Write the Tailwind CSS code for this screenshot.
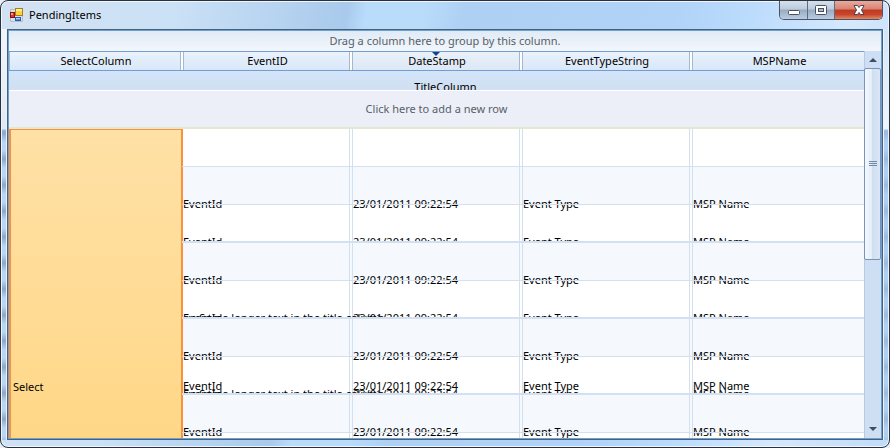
<!DOCTYPE html>
<html lang="en">
  <head>
    <meta charset="utf-8" />
    <meta content="width=device-width, initial-scale=1" name="viewport" />
    <title>PendingItems</title>
    <script src="https://cdn.jsdelivr.net/npm/@tailwindcss/browser@4"></script>
  </head>

  <body
    class="h-screen overflow-hidden bg-[#e6eef6] font-['Noto_Sans','Open_Sans',sans-serif] text-[11px] leading-4 text-black"
  >
    <main
      class="flex h-full flex-col rounded-lg border border-[#2b303c] bg-[linear-gradient(100deg,#d3e2f2_0%,#cbe1f6_18%,#a9caec_36%,#badcfb_38%,#badcfb_44%,#aed0f3_48%,#b0d3f7_70%,#bcdcfc_78%,#d5e8fd_88%,#c0dbf8_100%)] shadow-[inset_0_0_0_1px_#eef6ff]"
    >
      <header class="flex h-7 shrink-0 items-start justify-between pr-1.5 pl-2">
        <div class="flex items-center gap-1 pt-1.5">
          <svg class="size-4" viewBox="0 0 16 16" aria-hidden="true">
            <path d="M1.500 2.500h5v4M1.500 10v4.500h4M6 14.500h7.500V9M1.500 2.500v3" fill="none" stroke="#bdbab8" />
            <rect x="6.500" y="1.500" width="7" height="7" fill="#fcd23c" stroke="#b07c10" />
            <path d="M7 2h6v2H7z" fill="#fff0a0" />
            <rect x="1.500" y="5.500" width="4" height="5" fill="#d03a2a" stroke="#8b1410" />
            <path d="M2 6h2v2H2z" fill="#f59a80" />
            <rect x="6.500" y="10.500" width="5" height="3" fill="#5a94ea" stroke="#2e5cb4" />
            <path d="M7 11h4v1H7z" fill="#b4d2ff" />
          </svg>
          <h1 class="text-[11px] leading-4">PendingItems</h1>
        </div>
        <div
          class="flex h-[19px] overflow-hidden rounded-b-[5px] border border-t-0 border-[#4c5566]"
        >
          <button
            type="button"
            aria-label="Minimize"
            class="grid w-7 place-items-center border-r border-[#5e6b80] bg-[linear-gradient(#d5e0ec_0%,#bccbdc_45%,#98abc1_50%,#b9cde2_100%)]"
          >
            <svg class="h-3.5 w-4" viewBox="0 0 16 14">
              <rect x="2.500" y="7.500" width="11" height="4" rx="1" fill="#fff" stroke="#4b5160" />
            </svg>
          </button>
          <button
            type="button"
            aria-label="Maximize"
            class="grid w-[27px] place-items-center border-r border-[#5e6b80] bg-[linear-gradient(#d5e0ec_0%,#bccbdc_45%,#98abc1_50%,#b9cde2_100%)]"
          >
            <svg class="h-3.5 w-4" viewBox="0 0 16 14">
              <rect x="2.500" y="2.500" width="11" height="9" rx="1" fill="#fff" stroke="#4b5160" />
              <rect x="5.500" y="5.500" width="5" height="3" fill="#a9bdd2" stroke="#4b5160" />
            </svg>
          </button>
          <button
            type="button"
            aria-label="Close"
            class="grid w-[47px] place-items-center bg-[linear-gradient(#e9aa9c_0%,#d98270_45%,#bd3a22_50%,#c9452c_75%,#e08a66_100%)]"
          >
            <svg class="h-3.5 w-4" viewBox="0 0 16 14">
              <path d="M3 2.500h3.500L8 4.500l1.500-2H13L10.500 7l2.500 4.500H9.500L8 9.500l-1.500 2H3L5.500 7z" fill="#fff" stroke="#4b4453" />
            </svg>
          </button>
        </div>
      </header>

      <div class="mb-[7px] flex min-h-0 flex-1">
        <div
          class="w-1.5 shrink-0 border-x border-[#eaf4ff] bg-[linear-gradient(#eff6fe_0px,#dfe9f5_100px,transparent_101px),repeating-linear-gradient(#8fa6c8_0px,#b9d7f5_9px,#b9d7f5_17px,#8fa6c8_26px)]"
        ></div>
        <section
          class="flex min-h-0 min-w-0 flex-1 flex-col border border-[#4a6078] bg-white"
        >
          <div class="flex min-h-0 flex-1 flex-col border border-[#6aa0d2]">
            <p
              class="h-5 shrink-0 bg-linear-to-b from-[#e0ebf6] to-[#f3f6fc] text-center leading-5 text-[#585f69]"
            >
              Drag a column here to group by this column.
            </p>
            <div class="flex min-h-0 flex-1">
              <div class="min-w-0 flex-1 overflow-hidden">
                <table class="w-full table-fixed border-separate border-spacing-0">
                  <colgroup>
                    <col class="w-[174px]" />
                    <col class="w-[169px]" />
                    <col class="w-[170px]" />
                    <col class="w-[170px]" />
                    <col />
                  </colgroup>
                  <thead id="head"></thead>
                  <tbody id="rows"></tbody>
                </table>
              </div>
              <div
                class="flex w-[17px] shrink-0 flex-col border-l border-[#b4cbe6] bg-[#cfdff3]"
              >
                <button type="button" aria-label="Scroll up" class="grid h-[17px] place-items-center">
                  <svg class="h-1 w-2" viewBox="0 0 8 4"><path d="M0 4l4-4 4 4z" fill="#3c4d66" /></svg>
                </button>
                <div
                  class="-ml-px grid h-48 place-items-center rounded-xs border border-[#7893b5] bg-[linear-gradient(90deg,#f5f9fe_0%,#e3edf9_45%,#d0dff0_50%,#dbe7f6_100%)]"
                >
                  <svg class="h-2 w-2" viewBox="0 0 8 8">
                    <path d="M0 1.500h8M0 3.500h8M0 5.500h8" stroke="#7088a8" />
                  </svg>
                </div>
                <button type="button" aria-label="Scroll down" class="mt-auto grid h-[18px] place-items-center">
                  <svg class="h-1 w-2" viewBox="0 0 8 4"><path d="M0 0l4 4 4-4z" fill="#3c4d66" /></svg>
                </button>
              </div>
            </div>
          </div>
        </section>
        <div
          class="w-1.5 shrink-0 border-x border-[#eaf4ff] bg-[linear-gradient(#d0e6fc_0px,#eff6fe_100px,transparent_101px),repeating-linear-gradient(#9db9de_0px,#aed0f3_9px,#aed0f3_17px,#9db9de_26px)]"
        ></div>
      </div>
    </main>

    <script>
      const columns = ["EventID", "DateStamp", "EventTypeString", "MSPName"];
      const values = ["EventId", "23/01/2011 09:22:54", "Event Type", "MSP Name"];
      const longTitle = "on Some longer text in the title column";

      const headCell = (name, sorted, last) => `
        <th scope="col" class="h-5 border-y border-[#6f9fd0] p-0 font-normal">
          <div class="relative h-[18px] border-l border-[#a3b8d2] pl-0.5 leading-[18px] ${last ? "" : "mr-0.5 border-r"} ${
            sorted
              ? "bg-linear-to-b from-[#eaf1f9] to-[#dce8f5]"
              : "bg-linear-to-b from-[#eaf2fc] to-[#d9e7f8]"
          }">
            ${sorted ? '<svg class="absolute top-0 left-1/2 h-1 w-2 -translate-x-1/2" viewBox="0 0 8 4"><path d="M0 0h8L4 4z" fill="#17428b" /></svg>' : ""}
            ${name}
          </div>
        </th>`;

      document.getElementById("head").innerHTML = `
        <tr>
          ${headCell("SelectColumn")}
          ${columns.map((c, i) => headCell(c, c === "DateStamp", i === 3)).join("")}
        </tr>
        <tr>
          <th scope="colgroup" colspan="5" class="p-0 font-normal">
            <div class="h-5 overflow-hidden border-b border-white bg-linear-to-b from-[#d3e5fa] to-[#d0dff1] pt-2 pl-[18px]">
              TitleColumn
            </div>
          </th>
        </tr>
        <tr>
          <td colspan="5" class="h-[38px] border-b-2 border-[#e4e8d0] bg-[#eceff7] p-0 text-center text-[#585f69]">
            Click here to add a new row
          </td>
        </tr>`;

      // Bands are 38px tall; a value hangs over the rule under its band
      const bodyCell = (text, row, col) => {
        const tinted = row % 2 === 1;
        const title = col === 0 && (row === 4 || row === 6);
        return `
        <td class="p-0 ${tinted ? "bg-[#f5f9fe]" : "bg-white"}">
          <div class="relative h-[38px] border-[#d3e0f1] ${col === 0 ? "" : "border-l"} ${col === 3 ? "" : "mr-0.5 border-r"}">
            <div class="absolute inset-x-0 top-0 whitespace-nowrap ${tinted ? "" : "h-9 overflow-y-clip"}">
              ${row === 0 ? "" : `<span class="absolute top-[29px] left-0 z-10">${text}</span>`}
              ${title ? `<span class="absolute top-[29px] left-0 z-10">${longTitle}</span>` : ""}
              ${row === 6 ? `<span class="absolute top-[21px] left-0 z-10">${text}</span>` : ""}
            </div>
            <div class="absolute -right-1 bottom-0 -left-px z-20 bg-[#d3e0f1] ${tinted || row === 0 ? "h-px" : "h-0.5"}"></div>
          </div>
        </td>`;
      };

      let html = "";
      for (let row = 0; row < 9; row++) {
        html += "<tr>";
        if (row === 0) {
          html += `
            <td rowspan="10" class="border-x-2 border-t border-[#f9913d] bg-linear-to-b from-[#ffe1a6] to-[#ffd070] px-0.5 py-0 align-middle">
              Select
            </td>`;
        }
        html += values.map((v, col) => bodyCell(v, row, col)).join("");
        html += "</tr>";
      }
      html += '<tr><td colspan="4" class="h-[172px] p-0"></td></tr>';
      document.getElementById("rows").innerHTML = html;
    </script>
  </body>
</html>
